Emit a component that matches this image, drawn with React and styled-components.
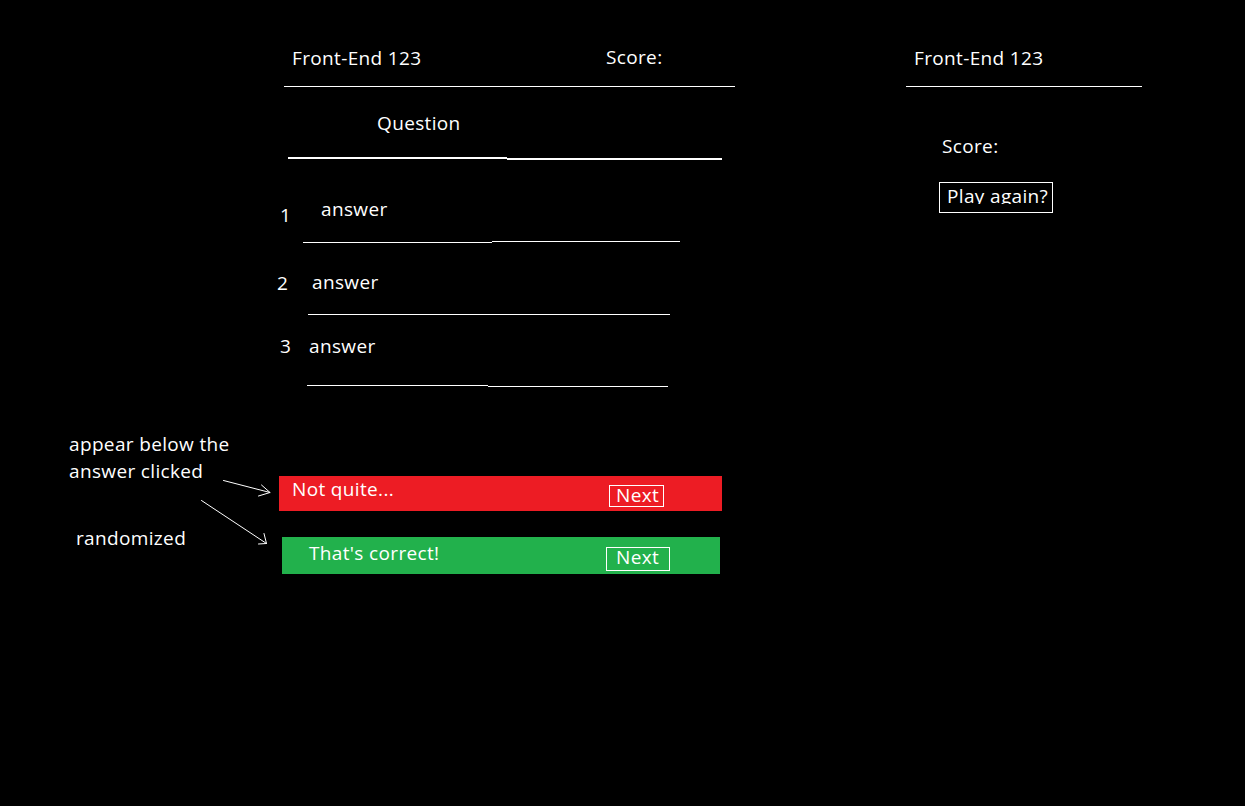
import React from "react";
import styled, { createGlobalStyle } from "styled-components";

const Global = createGlobalStyle`
  html, body { margin: 0; padding: 0; background: #000; }
  body {
    font-family: "Open Sans", "Liberation Sans", sans-serif;
    font-size: 19px;
    line-height: 26px;
    letter-spacing: 0.35px;
    color: #fff;
  }
  * { box-sizing: border-box; }
`;

const Page = styled.div`
  width: 1245px;
  height: 806px;
  background: #000;
  display: flex;
  align-items: flex-start;
  overflow: hidden;
`;

/* ---------- annotations ---------- */
const Notes = styled.aside`
  position: relative;
  flex: 0 0 277px;
  height: 806px;
  padding: 431px 0 0 69px;
`;

const Note = styled.p`
  margin: ${(p) => p.$top}px 0 0 ${(p) => p.$indent}px;
  line-height: ${(p) => p.$lh}px;
  white-space: nowrap;
`;

const ArrowLayer = styled.svg`
  position: absolute;
  left: 0;
  top: 0;
  width: 277px;
  height: 806px;
  pointer-events: none;
`;

/* ---------- shared ---------- */
const Header = styled.header`
  display: flex;
  align-items: flex-start;
  margin-left: ${(p) => p.$indent}px;
  width: ${(p) => p.$w}px;
  padding: 45px 0 15px;
  border-bottom: 1px solid #fff;
`;

const Title = styled.h1`
  margin: 0;
  font: inherit;
  letter-spacing: inherit;
  white-space: nowrap;
  padding-left: ${(p) => p.$pad}px;
  flex: 0 0 ${(p) => (p.$w ? `${p.$w}px` : "auto")};
`;

const ScoreLabel = styled.span`
  display: block;
  white-space: nowrap;
  margin-top: ${(p) => p.$top}px;
  padding-left: ${(p) => p.$pad || 0}px;
`;

const SplitRule = styled.div`
  display: flex;
  align-items: flex-start;
  height: 3px;
  margin: ${(p) => p.$top}px 0 0 ${(p) => p.$indent}px;
`;

const Seg = styled.span`
  display: block;
  width: ${(p) => p.$w}px;
  height: ${(p) => p.$h || 1}px;
  margin-top: ${(p) => p.$y || 0}px;
  background: #fff;
`;

/* ---------- quiz ---------- */
const Quiz = styled.main`
  flex: 0 0 458px;
  display: flex;
  flex-direction: column;
  align-items: flex-start;
`;

const QuestionBlock = styled.section`
  margin: 23px 0 0 11px;
  width: 434px;
`;

const QuestionText = styled.h2`
  margin: 0;
  font: inherit;
  letter-spacing: inherit;
  padding-left: 89px;
`;

const Answer = styled.div`
  margin-top: ${(p) => p.$top}px;
  display: flex;
  flex-direction: column;
`;

const AnswerRow = styled.div`
  display: flex;
  align-items: flex-start;
`;

const Num = styled.span`
  flex: 0 0 ${(p) => p.$w}px;
  padding-left: ${(p) => p.$pad}px;
  margin-top: ${(p) => p.$top}px;
`;

const AnswerText = styled.span`
  white-space: nowrap;
`;

const Bar = styled.div`
  display: flex;
  align-items: flex-start;
  margin: ${(p) => p.$top}px 0 0 ${(p) => p.$indent}px;
  width: ${(p) => p.$w}px;
  height: ${(p) => p.$h}px;
  background: ${(p) => (p.$tone === "bad" ? "#ed1c24" : "#22b14c")};
`;

const BarLabel = styled.span`
  flex: 0 0 ${(p) => p.$w}px;
  padding-left: ${(p) => p.$pad}px;
  margin-top: ${(p) => p.$top}px;
  white-space: nowrap;
`;

const NextBox = styled.span`
  display: block;
  margin-top: ${(p) => p.$top}px;
  width: ${(p) => p.$w}px;
  height: ${(p) => p.$h}px;
  padding-left: ${(p) => p.$pad}px;
  border: 1px solid #fff;
  line-height: 18px;
  white-space: nowrap;
`;

/* ---------- results ---------- */
const Results = styled.section`
  flex: 0 0 236px;
  margin-left: 171px;
  display: flex;
  flex-direction: column;
  align-items: flex-start;
`;

const PlayAgain = styled.div`
  margin: 23px 0 0 33px;
  width: 114px;
  height: 31px;
  border: 1px solid #fff;
  padding-left: 7px;
`;

const ClippedText = styled.span`
  display: block;
  height: 21px;
  overflow: hidden;
  white-space: nowrap;
`;

const answers = [
  { n: 1, top: 36, numW: 44, numPad: 3, numTop: 6, ruleTop: 13, indent: 26, segs: [{ w: 189, y: 1 }, { w: 188, y: 0 }] },
  { n: 2, top: 25, numW: 35, numPad: 0, numTop: 1, ruleTop: 18, indent: 31, segs: [{ w: 362, y: 0 }] },
  { n: 3, top: 16, numW: 32, numPad: 3, numTop: 0, ruleTop: 26, indent: 30, segs: [{ w: 181, y: 0 }, { w: 180, y: 1 }] },
];

export default function App() {
  return (
    <>
      <Global />
      <Page>
        <Notes>
          <Note $top={0} $indent={0} $lh={27}>
            appear below the
            <br />
            answer clicked
          </Note>
          <Note $top={40} $indent={7} $lh={26}>
            randomized
          </Note>
          <ArrowLayer viewBox="0 0 277 806">
            <g stroke="#fff" strokeWidth="1" fill="none" strokeLinecap="round">
              <line x1="223.5" y1="480.5" x2="270" y2="492.5" />
              <polyline points="261.5,485 270,492.5 258.5,496" />
              <line x1="201.5" y1="500.5" x2="266.5" y2="543.5" />
              <polyline points="264,533.5 266.5,543.5 258.5,544" />
            </g>
          </ArrowLayer>
        </Notes>

        <Quiz>
          <Header $indent={7} $w={451}>
            <Title $pad={8} $w={322}>Front-End 123</Title>
            <ScoreLabel $top={-1}>Score:</ScoreLabel>
          </Header>

          <QuestionBlock>
            <QuestionText>Question</QuestionText>
            <SplitRule $top={21} $indent={0}>
              <Seg $w={219} $h={2} $y={0} />
              <Seg $w={216} $h={2} $y={1} />
            </SplitRule>
          </QuestionBlock>

          {answers.map((a) => (
            <Answer key={a.n} $top={a.top}>
              <AnswerRow>
                <Num $w={a.numW} $pad={a.numPad} $top={a.numTop}>
                  {a.n}
                </Num>
                <AnswerText>answer</AnswerText>
              </AnswerRow>
              <SplitRule $top={a.ruleTop} $indent={a.indent}>
                {a.segs.map((s, i) => (
                  <Seg key={i} $w={s.w} $y={s.y} />
                ))}
              </SplitRule>
            </Answer>
          ))}

          <Bar $tone="bad" $top={88} $indent={2} $w={443} $h={35}>
            <BarLabel $w={330} $pad={13} $top={0}>
              Not quite...
            </BarLabel>
            <NextBox $top={9} $w={55} $h={22} $pad={6}>
              Next
            </NextBox>
          </Bar>

          <Bar $tone="good" $top={26} $indent={5} $w={438} $h={37}>
            <BarLabel $w={324} $pad={27} $top={3}>
              That's correct!
            </BarLabel>
            <NextBox $top={10} $w={64} $h={24} $pad={9}>
              Next
            </NextBox>
          </Bar>
        </Quiz>

        <Results>
          <Header $indent={0} $w={236}>
            <Title $pad={8}>Front-End 123</Title>
          </Header>
          <ScoreLabel $top={46} $pad={36}>
            Score:
          </ScoreLabel>
          <PlayAgain>
            <ClippedText>Play again?</ClippedText>
          </PlayAgain>
        </Results>
      </Page>
    </>
  );
}
